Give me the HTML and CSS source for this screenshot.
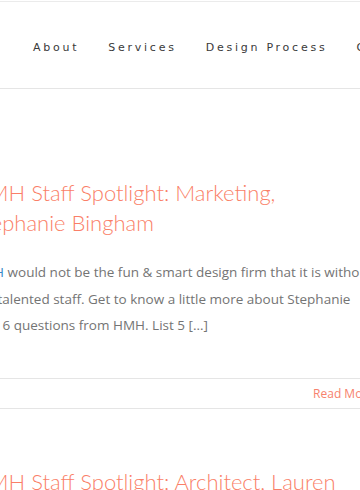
FILE: index.html
```html
<!DOCTYPE html>
<html lang="en">
<head>
    <meta charset="UTF-8">
    <meta name="viewport" content="width=device-width, initial-scale=1.0">
    <title>Blog</title>
    <link rel="stylesheet" href="styles.css">
</head>
<body>
    <header class="header">
        <nav class="menu">
            <a href="#">About</a>
            <a href="#">Services</a>
            <a href="#">Design Process</a>
            <a href="#">Contact</a>
        </nav>
    </header>
    <main class="posts">
        <article class="post">
            <h2 class="post-title">HMH Staff Spotlight: Marketing, Stephanie Bingham</h2>
            <p class="post-text"><a href="#" class="hl">HMH</a> would not be the fun &amp; smart design firm that it is without our talented staff. Get to know a little more about Stephanie with 6 questions from HMH. List 5 [&hellip;]</p>
            <div class="post-meta">
                <a href="#" class="more">Read More</a>
            </div>
        </article>
        <article class="post">
            <h2 class="post-title">HMH Staff Spotlight: Architect, Lauren</h2>
        </article>
    </main>
</body>
</html>
```

FILE: styles.css
```css
html, body{
    margin: 0;
    padding: 0;
    overflow: hidden;
}
body{
    background: #fff;
    font-family: "Open Sans", sans-serif;
    border-top: 1px solid #ebebeb;
    margin-top: 1px;
}
a{
    text-decoration: none;
}
.header{
    height: 86px;
    border-bottom: 1px solid #e5e5e5;
    display: flex;
    align-items: center;
}
.menu{
    display: flex;
    gap: 29px;
    padding: 4px 0 0 33px;
    white-space: nowrap;
}
.menu a{
    font-family: "DejaVu Sans", sans-serif;
    font-size: 11px;
    letter-spacing: 2.75px;
    color: #3a3a3a;
}
.posts{
    margin-left: -28px;
    width: 402px;
}
.post{
    padding-top: 89px;
}
.post + .post{
    padding-top: 58px;
}
.post-title{
    margin: 0;
    padding-right: 10px;
    font-family: Lato, sans-serif;
    font-weight: 300;
    font-size: 22px;
    line-height: 30px;
    color: #fa7f68;
}
.post-text{
    margin: 21px 0 0;
    font-size: 13.5px;
    line-height: 26.5px;
    color: #747474;
}
.hl{
    color: #3a8ac8;
}
.post-meta{
    margin-top: 39px;
    border-top: 1px solid #e5e5e5;
    border-bottom: 1px solid #e5e5e5;
    height: 29px;
    display: flex;
    justify-content: flex-end;
    align-items: center;
}
.more{
    font-size: 12px;
    color: #f7826d;
}
```
